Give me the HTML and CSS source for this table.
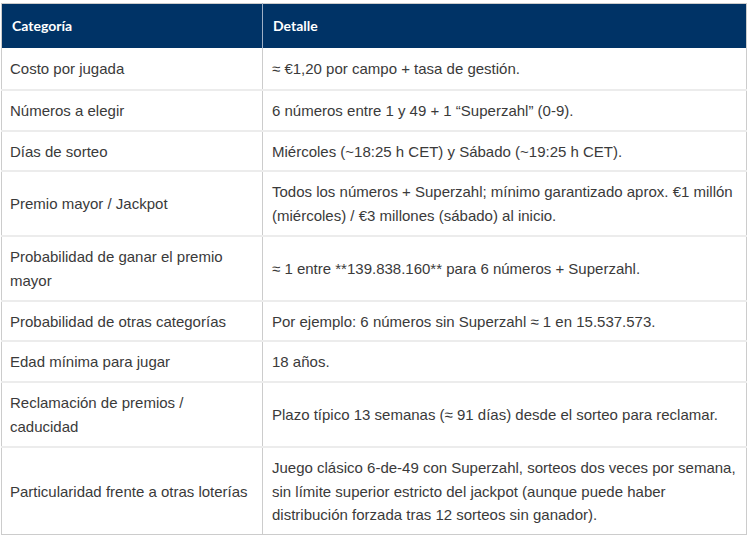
FILE: index.html
```html
<!DOCTYPE html>
<html lang="es">
<head>
<meta charset="utf-8">
<link rel="stylesheet" href="styles.css">
</head>
<body>
<div class="wrap">
<table class="info">
<thead>
<tr><th class="c1">Categoría</th><th>Detalle</th></tr>
</thead>
<tbody>
<tr><td>Costo por jugada</td><td>≈ €1,20 por campo + tasa de gestión.</td></tr>
<tr><td>Números a elegir</td><td>6 números entre 1 y 49 + 1 “Superzahl” (0-9).</td></tr>
<tr><td>Días de sorteo</td><td>Miércoles (~18:25 h CET) y Sábado (~19:25 h CET).</td></tr>
<tr><td>Premio mayor / Jackpot</td><td>Todos los números + Superzahl; mínimo garantizado aprox. €1 millón (miércoles) / €3 millones (sábado) al inicio.</td></tr>
<tr><td>Probabilidad de ganar el premio mayor</td><td>≈ 1 entre **139.838.160** para 6 números + Superzahl.</td></tr>
<tr><td>Probabilidad de otras categorías</td><td>Por ejemplo: 6 números sin Superzahl ≈ 1 en 15.537.573.</td></tr>
<tr><td>Edad mínima para jugar</td><td>18 años.</td></tr>
<tr><td>Reclamación de premios / caducidad</td><td>Plazo típico 13 semanas (≈ 91 días) desde el sorteo para reclamar.</td></tr>
<tr><td>Particularidad frente a otras loterías</td><td>Juego clásico 6-de-49 con Superzahl, sorteos dos veces por semana, sin límite superior estricto del jackpot (aunque puede haber distribución forzada tras 12 sorteos sin ganador).</td></tr>
</tbody>
</table>
</div>
</body>
</html>
```
FILE: styles.css
```css
html, body {
  margin: 0;
  padding: 0;
  background: #ffffff;
}
.wrap {
  padding: 3px 3px 0 1px;
}
.info {
  width: 746px;
  border-collapse: collapse;
  table-layout: fixed;
  font-family: "Liberation Sans", Arial, sans-serif;
  font-size: 15px;
  line-height: 23.8px;
  color: #3a3a3a;
  border: 1px solid #cccccc;
}
.info th {
  background: #003366;
  color: #ffffff;
  font-family: Lato, "Open Sans", sans-serif;
  font-weight: 700;
  font-size: 14px;
  line-height: 24px;
  text-align: left;
  padding: 10px 9px 10px 10px;
  height: 24px;
  border-left: 1px solid #9fb0c6;
}
.info th.c1 {
  width: 241px;
  border-left: none;
}
.info td {
  vertical-align: middle;
  padding: 8px 9px 7px 8px;
  border-top: 2px solid #ececec;
  border-left: 1px solid #cccccc;
}
.info tbody tr:first-child td {
  border-top: none;
  padding-top: 9px;
  padding-bottom: 8px;
}
.info td:first-child {
  border-left: none;
}
.info td + td {
  padding-left: 9px;
}
```
